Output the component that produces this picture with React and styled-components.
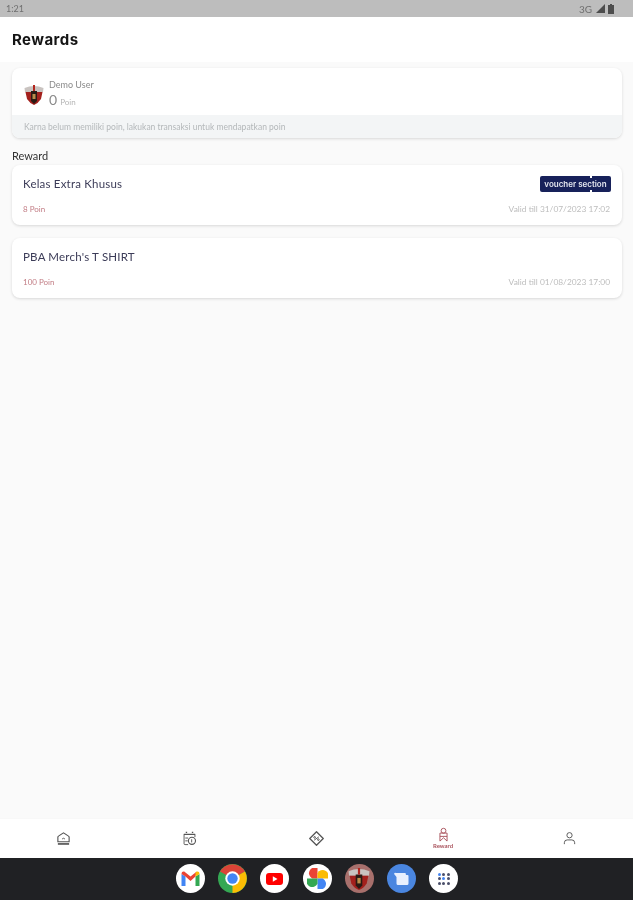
import styled, { createGlobalStyle } from "styled-components";

const GlobalStyle = createGlobalStyle`
    html, body {
        margin: 0;
        padding: 0;
        background: #fafafa;
    }
    * {
        box-sizing: border-box;
    }
`;

const rewards = [
    { id: 1, name: "Kelas Extra Khusus", points: "8 Poin", valid: "Valid till 31/07/2023 17:02", tip: true },
    { id: 2, name: "PBA Merch's T SHIRT", points: "100 Poin", valid: "Valid till 01/08/2023 17:00" },
];

function Shield({ size = 20 }) {
    return (
        <svg width={size} height={size} viewBox="0 0 20 20">
            <path d="M0.5 3 Q10 -1 19.5 3 L19 7 L1 7 Z" fill="#c9c3c0" />
            <path d="M1.5 7 L18.5 7 L17 14 Q14 18.5 10 20 Q6 18.5 3 14 Z" fill="#a3201c" />
            <path d="M7 6 L13 6 L13 16 L10 19 L7 16 Z" fill="#2a1a14" />
            <path d="M9 0 L11 0 L11 6 L9 6 Z" fill="#b3261e" />
            <path d="M8.5 9 L11.5 9 L11.5 14 L8.5 14 Z" fill="#b98d4a" />
        </svg>
    );
}

function HomeIcon() {
    return (
        <NavSvg viewBox="0 0 16 16">
            <path d="M2 6.5 Q2 5.8 3 5.2 L8 2 L13 5.2 Q14 5.8 14 6.5 V11.5 H2 Z" strokeWidth="1.2" />
            <path d="M6.5 8.5 Q8 7 9.5 8.5" />
            <path d="M2 13.8 H14" strokeWidth="1.8" />
        </NavSvg>
    );
}

function CalendarIcon() {
    return (
        <NavSvg viewBox="0 0 16 16">
            <path d="M4 1.5 H5.5 M10.5 1.5 H12 M2 3.5 H14" strokeWidth="1.4" />
            <path d="M6.5 14.5 H3.2 A1 1 0 0 1 2.2 13.5 V3.5 M13.8 3.5 V6.5" />
            <path d="M3.5 7.5 H6.5 M3.5 10.5 H6" />
            <circle cx="10.6" cy="10.5" r="3.8" strokeWidth="1.2" />
            <path d="M10.3 8.8 V12.2" />
        </NavSvg>
    );
}

function VoucherIcon() {
    return (
        <NavSvg viewBox="0 0 16 16">
            <path d="M8 0.8 L15.2 8 L8 15.2 L0.8 8 Z" strokeLinejoin="round" strokeWidth="1.4" />
            <path d="M5.5 9.8 L10.5 6.2" />
            <circle cx="6" cy="6.8" r="0.9" />
            <circle cx="10" cy="9.2" r="0.9" />
        </NavSvg>
    );
}

function RewardIcon() {
    return (
        <NavSvg viewBox="0 0 14 16" $active>
            <circle cx="7" cy="4" r="2.6" />
            <path d="M3.2 15 V6.5 H10.8 V15" />
            <path d="M3.2 10 H10.8 M3.2 15 L7 11.5 L10.8 15" />
        </NavSvg>
    );
}

function ProfileIcon() {
    return (
        <NavSvg viewBox="0 0 16 16">
            <circle cx="8" cy="4.5" r="2.8" />
            <path d="M2.5 14 V12.5 Q2.5 9.5 5.5 9.5 H10.5 Q13.5 9.5 13.5 12.5 V14" />
        </NavSvg>
    );
}

function GmailLogo() {
    return (
        <svg width="19" height="15" viewBox="0 0 19 15">
            <path d="M0.5 15 V3 L4.5 5.5 V15 Z" fill="#4285f4" />
            <path d="M14.5 15 V5.5 L18.5 3 V15 Z" fill="#34a853" />
            <path d="M0.5 3 Q0.5 0.2 3.2 0.6 L9.5 5.5 L15.8 0.6 L14.5 5.5 L9.5 10 L4.5 5.5 Z" fill="#ea4335" />
            <path d="M14.5 5.5 L18.5 3 Q18.5 0.2 15.8 0.6 L14.5 1.6 Z" fill="#fbbc04" />
        </svg>
    );
}

function ChromeLogo() {
    return (
        <svg width="29" height="29" viewBox="0 0 29 29">
            <circle cx="14.5" cy="14.5" r="14.5" fill="#34a853" />
            <path d="M14.5 14.5 L2 7.5 A14.5 14.5 0 0 1 27 7.5 Z" fill="#db4437" />
            <path d="M14.5 14.5 L27 7.5 A14.5 14.5 0 0 1 14.5 29 Z" fill="#fbbc04" />
            <circle cx="14.5" cy="14.5" r="7.2" fill="#fff" />
            <circle cx="14.5" cy="14.5" r="5.2" fill="#4285f4" />
        </svg>
    );
}

function YoutubeLogo() {
    return (
        <svg width="17" height="12" viewBox="0 0 17 12">
            <rect width="17" height="12" rx="3" fill="#f00" />
            <path d="M6.8 3.2 L11.5 6 L6.8 8.8 Z" fill="#fff" />
        </svg>
    );
}

function PhotosLogo() {
    return (
        <svg width="21" height="21" viewBox="0 0 20 20">
            <path d="M10 10 H5 A5 5 0 0 1 10 0 Z" fill="#ea4335" />
            <path d="M10 10 V5 A5 5 0 0 1 20 10 Z" fill="#fbbc04" />
            <path d="M10 10 H15 A5 5 0 0 1 10 20 Z" fill="#4285f4" />
            <path d="M10 10 V15 A5 5 0 0 1 0 10 Z" fill="#34a853" />
        </svg>
    );
}

function MessagesLogo() {
    return (
        <svg width="15" height="14" viewBox="0 0 15 14">
            <path d="M2 1 H11.5 L12 3 H13.5 A1 1 0 0 1 14.5 4 V11.5 A1.5 1.5 0 0 1 13 13 H4 A1.5 1.5 0 0 1 2.5 11.5 V5 L0.5 2.5 A1 1 0 0 1 2 1 Z" fill="#e8f0fe" />
        </svg>
    );
}

export default function App() {
    return (
        <Page>
            <GlobalStyle />

            <StatusBar>
                <span>1:21</span>
                <StatusIcons>
                    <StatusNetwork>3G</StatusNetwork>
                    <svg width="9" height="9" viewBox="0 0 9 9">
                        <path d="M0 9 L9 0 V9 Z" fill="#4d4d4d" />
                    </svg>
                    <svg width="6" height="10" viewBox="0 0 6 10">
                        <path d="M2 0 H4 V1 H6 V10 H0 V1 H2 Z" fill="#4d4d4d" />
                    </svg>
                </StatusIcons>
            </StatusBar>

            <Header>Rewards</Header>

            <Content>
                <ProfileCard>
                    <ProfileRow>
                        <Shield />
                        <ProfileText>
                            <UserName>Demo User</UserName>
                            <PointLine>
                                <PointValue>0</PointValue>
                                <PointUnit>Poin</PointUnit>
                            </PointLine>
                        </ProfileText>
                    </ProfileRow>
                    <ProfileNote>Karna belum memiliki poin, lakukan transaksi untuk mendapatkan poin</ProfileNote>
                </ProfileCard>

                <SectionTitle>Reward</SectionTitle>

                <RewardList>
                    {rewards.map((item) => (
                        <RewardCard key={item.id}>
                            <RewardTop>
                                <RewardName>{item.name}</RewardName>
                                {item.tip && <Tooltip>voucher section</Tooltip>}
                            </RewardTop>
                            <RewardBottom>
                                <RewardPoints>{item.points}</RewardPoints>
                                <RewardValid>{item.valid}</RewardValid>
                            </RewardBottom>
                        </RewardCard>
                    ))}
                </RewardList>
            </Content>

            <BottomNav>
                <NavItem><HomeIcon /></NavItem>
                <NavItem><CalendarIcon /></NavItem>
                <NavItem><VoucherIcon /></NavItem>
                <NavItem>
                    <RewardIcon />
                    <NavLabel>Reward</NavLabel>
                </NavItem>
                <NavItem><ProfileIcon /></NavItem>
            </BottomNav>

            <Dock>
                <DockIcon><GmailLogo /></DockIcon>
                <DockIcon $bare><ChromeLogo /></DockIcon>
                <DockIcon><YoutubeLogo /></DockIcon>
                <DockIcon><PhotosLogo /></DockIcon>
                <DockIcon $bg="#a8706c"><Shield size={22} /></DockIcon>
                <DockIcon $bg="#4a86e0"><MessagesLogo /></DockIcon>
                <DockIcon>
                    <AppGrid>
                        {["#4285f4", "#4a4f6a", "#4a4f6a", "#4a4f6a", "#4285f4", "#4a4f6a", "#4a4f6a", "#4a4f6a", "#4a4f6a"].map((c, i) => (
                            <AppDot key={i} $color={c} />
                        ))}
                    </AppGrid>
                </DockIcon>
            </Dock>
        </Page>
    );
}

const Page = styled.div`
    width: 633px;
    height: 900px;
    display: flex;
    flex-direction: column;
    overflow: hidden;
    background-color: #fafafa;
    font-family: "Lato", "Noto Sans", sans-serif;
    filter: blur(0.5px);
`;

const StatusBar = styled.div`
    height: 17px;
    padding: 0 19px 0 6px;
    display: flex;
    justify-content: space-between;
    align-items: center;
    background-color: #bdbdbd;
    color: #6f6f6f;
    font-size: 9px;
`;

const StatusIcons = styled.div`
    display: flex;
    align-items: center;
    gap: 3px;
`;

const StatusNetwork = styled.span`
    margin-right: 1px;
    font-size: 10px;
`;

const Header = styled.div`
    height: 45px;
    padding-left: 12px;
    display: flex;
    align-items: center;
    background-color: #fff;
    color: #151515;
    font-family: "Inter", sans-serif;
    font-size: 15px;
    font-weight: 700;
    letter-spacing: 0.45px;
`;

const Content = styled.div`
    flex: 1;
    padding: 6px 11px 0 12px;
    display: flex;
    flex-direction: column;
`;

const ProfileCard = styled.div`
    height: 70px;
    display: flex;
    flex-direction: column;
    border-radius: 8px;
    overflow: hidden;
    background-color: #fff;
    box-shadow: 0 1px 3px rgba(0, 0, 0, 0.14);
`;

const ProfileRow = styled.div`
    height: 47px;
    padding: 6px 0 0 12px;
    display: flex;
    align-items: center;
    gap: 6px;
`;

const ProfileText = styled.div`
    margin-left: -1px;
    display: flex;
    flex-direction: column;
`;

const UserName = styled.div`
    color: #8a8a8a;
    font-size: 9px;
    line-height: 12px;
`;

const PointLine = styled.div`
    display: flex;
    align-items: baseline;
    gap: 3px;
    line-height: 17px;
`;

const PointValue = styled.span`
    color: #8a8a8a;
    font-size: 14px;
`;

const PointUnit = styled.span`
    color: #b5b5b5;
    font-size: 8px;
`;

const ProfileNote = styled.div`
    flex: 1;
    padding-left: 12px;
    display: flex;
    align-items: center;
    background-color: #f3f5f6;
    color: #b4b8ba;
    font-size: 8.5px;
`;

const SectionTitle = styled.div`
    margin-top: 11px;
    height: 16px;
    color: #333;
    font-size: 11px;
    line-height: 13px;
`;

const RewardList = styled.div`
    display: flex;
    flex-direction: column;
    gap: 13px;
`;

const RewardCard = styled.div`
    height: 60px;
    padding: 0 12px 0 11px;
    display: flex;
    flex-direction: column;
    border-radius: 8px;
    background-color: #fff;
    box-shadow: 0 1px 3px rgba(0, 0, 0, 0.14);
`;

const RewardTop = styled.div`
    height: 37px;
    display: flex;
    justify-content: space-between;
    align-items: center;
`;

const RewardName = styled.div`
    color: #3c3c58;
    font-size: 11.5px;
    letter-spacing: 0.2px;
`;

const Tooltip = styled.div`
    position: relative;
    width: 71px;
    height: 16px;
    margin-right: -1px;
    display: flex;
    justify-content: center;
    align-items: center;
    border-radius: 2px;
    background-color: #17215a;
    color: #e6e8f0;
    font-family: "Inter", sans-serif;
    font-size: 8px;
    font-weight: 600;
    white-space: nowrap;

    &::before,
    &::after {
        content: "";
        position: absolute;
        left: 50px;
        width: 2px;
        height: 2px;
        background-color: #fff;
    }

    &::before {
        top: 0;
    }

    &::after {
        bottom: 0;
    }
`;

const RewardBottom = styled.div`
    flex: 1;
    padding-bottom: 10px;
    display: flex;
    justify-content: space-between;
    align-items: center;
`;

const RewardPoints = styled.div`
    color: #c27d85;
    font-size: 8px;
`;

const RewardValid = styled.div`
    color: #bdbdbd;
    font-size: 8.4px;
`;

const BottomNav = styled.div`
    height: 40px;
    display: grid;
    grid-template-columns: repeat(5, 1fr);
    background-color: #fff;
    border-top: 1px solid #f8f8f8;
`;

const NavItem = styled.div`
    display: flex;
    flex-direction: column;
    align-items: center;
    justify-content: center;
`;

const NavSvg = styled.svg`
    width: 15px;
    height: 15px;
    fill: none;
    stroke: ${(props) => (props.$active ? "#a9525c" : "#555")};
    stroke-width: 1;
`;

const NavLabel = styled.div`
    color: #a9525c;
    font-size: 6px;
    font-weight: 700;
    line-height: 8px;
`;

const Dock = styled.div`
    height: 42px;
    padding: 0 0 1px 1px;
    display: flex;
    justify-content: center;
    align-items: center;
    gap: 13.3px;
    background-color: #202124;
`;

const DockIcon = styled.div`
    width: 29px;
    height: 29px;
    display: flex;
    justify-content: center;
    align-items: center;
    border-radius: 50%;
    background-color: ${(props) => (props.$bare ? "transparent" : props.$bg || "#fff")};
`;

const AppGrid = styled.div`
    display: grid;
    grid-template-columns: repeat(3, 3px);
    gap: 1.5px;
`;

const AppDot = styled.div`
    width: 3px;
    height: 3px;
    border-radius: 50%;
    background-color: ${(props) => props.$color};
`;
